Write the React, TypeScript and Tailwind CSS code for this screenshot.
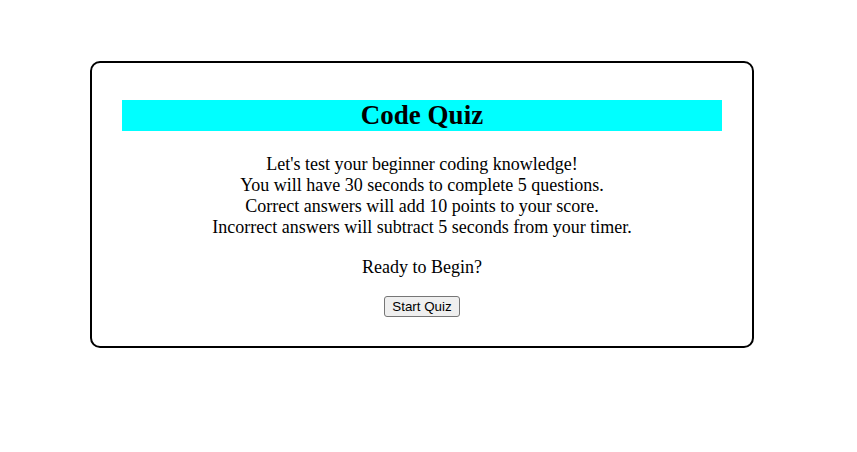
export default function App() {
  return (
    <div className="min-h-[452px] bg-white font-['Liberation_Serif','Times_New_Roman',serif] text-black">
      <div className="pt-[61px] pl-[90px]">
        <div className="flex w-[664px] flex-col items-center rounded-[10px] border-2 border-black pt-[37px] pb-[29px]">
          <h1 className="w-[600px] bg-[#00ffff] text-center text-[27px] leading-[31px] font-bold">
            Code Quiz
          </h1>
          <div className="mt-[23px] text-center text-[18px] leading-[21px]">
            <p>Let's test your beginner coding knowledge!</p>
            <p>You will have 30 seconds to complete 5 questions.</p>
            <p>Correct answers will add 10 points to your score.</p>
            <p>Incorrect answers will subtract 5 seconds from your timer.</p>
          </div>
          <p className="mt-[19px] text-[18px] leading-[21px]">Ready to Begin?</p>
          <button className="mt-[18px] rounded-[3px] border border-[#767676] bg-[#efefef] px-[7px] py-[2px] font-['Liberation_Sans',Arial,sans-serif] text-[13.33px] leading-[15px]">
            Start Quiz
          </button>
        </div>
      </div>
    </div>
  );
}
